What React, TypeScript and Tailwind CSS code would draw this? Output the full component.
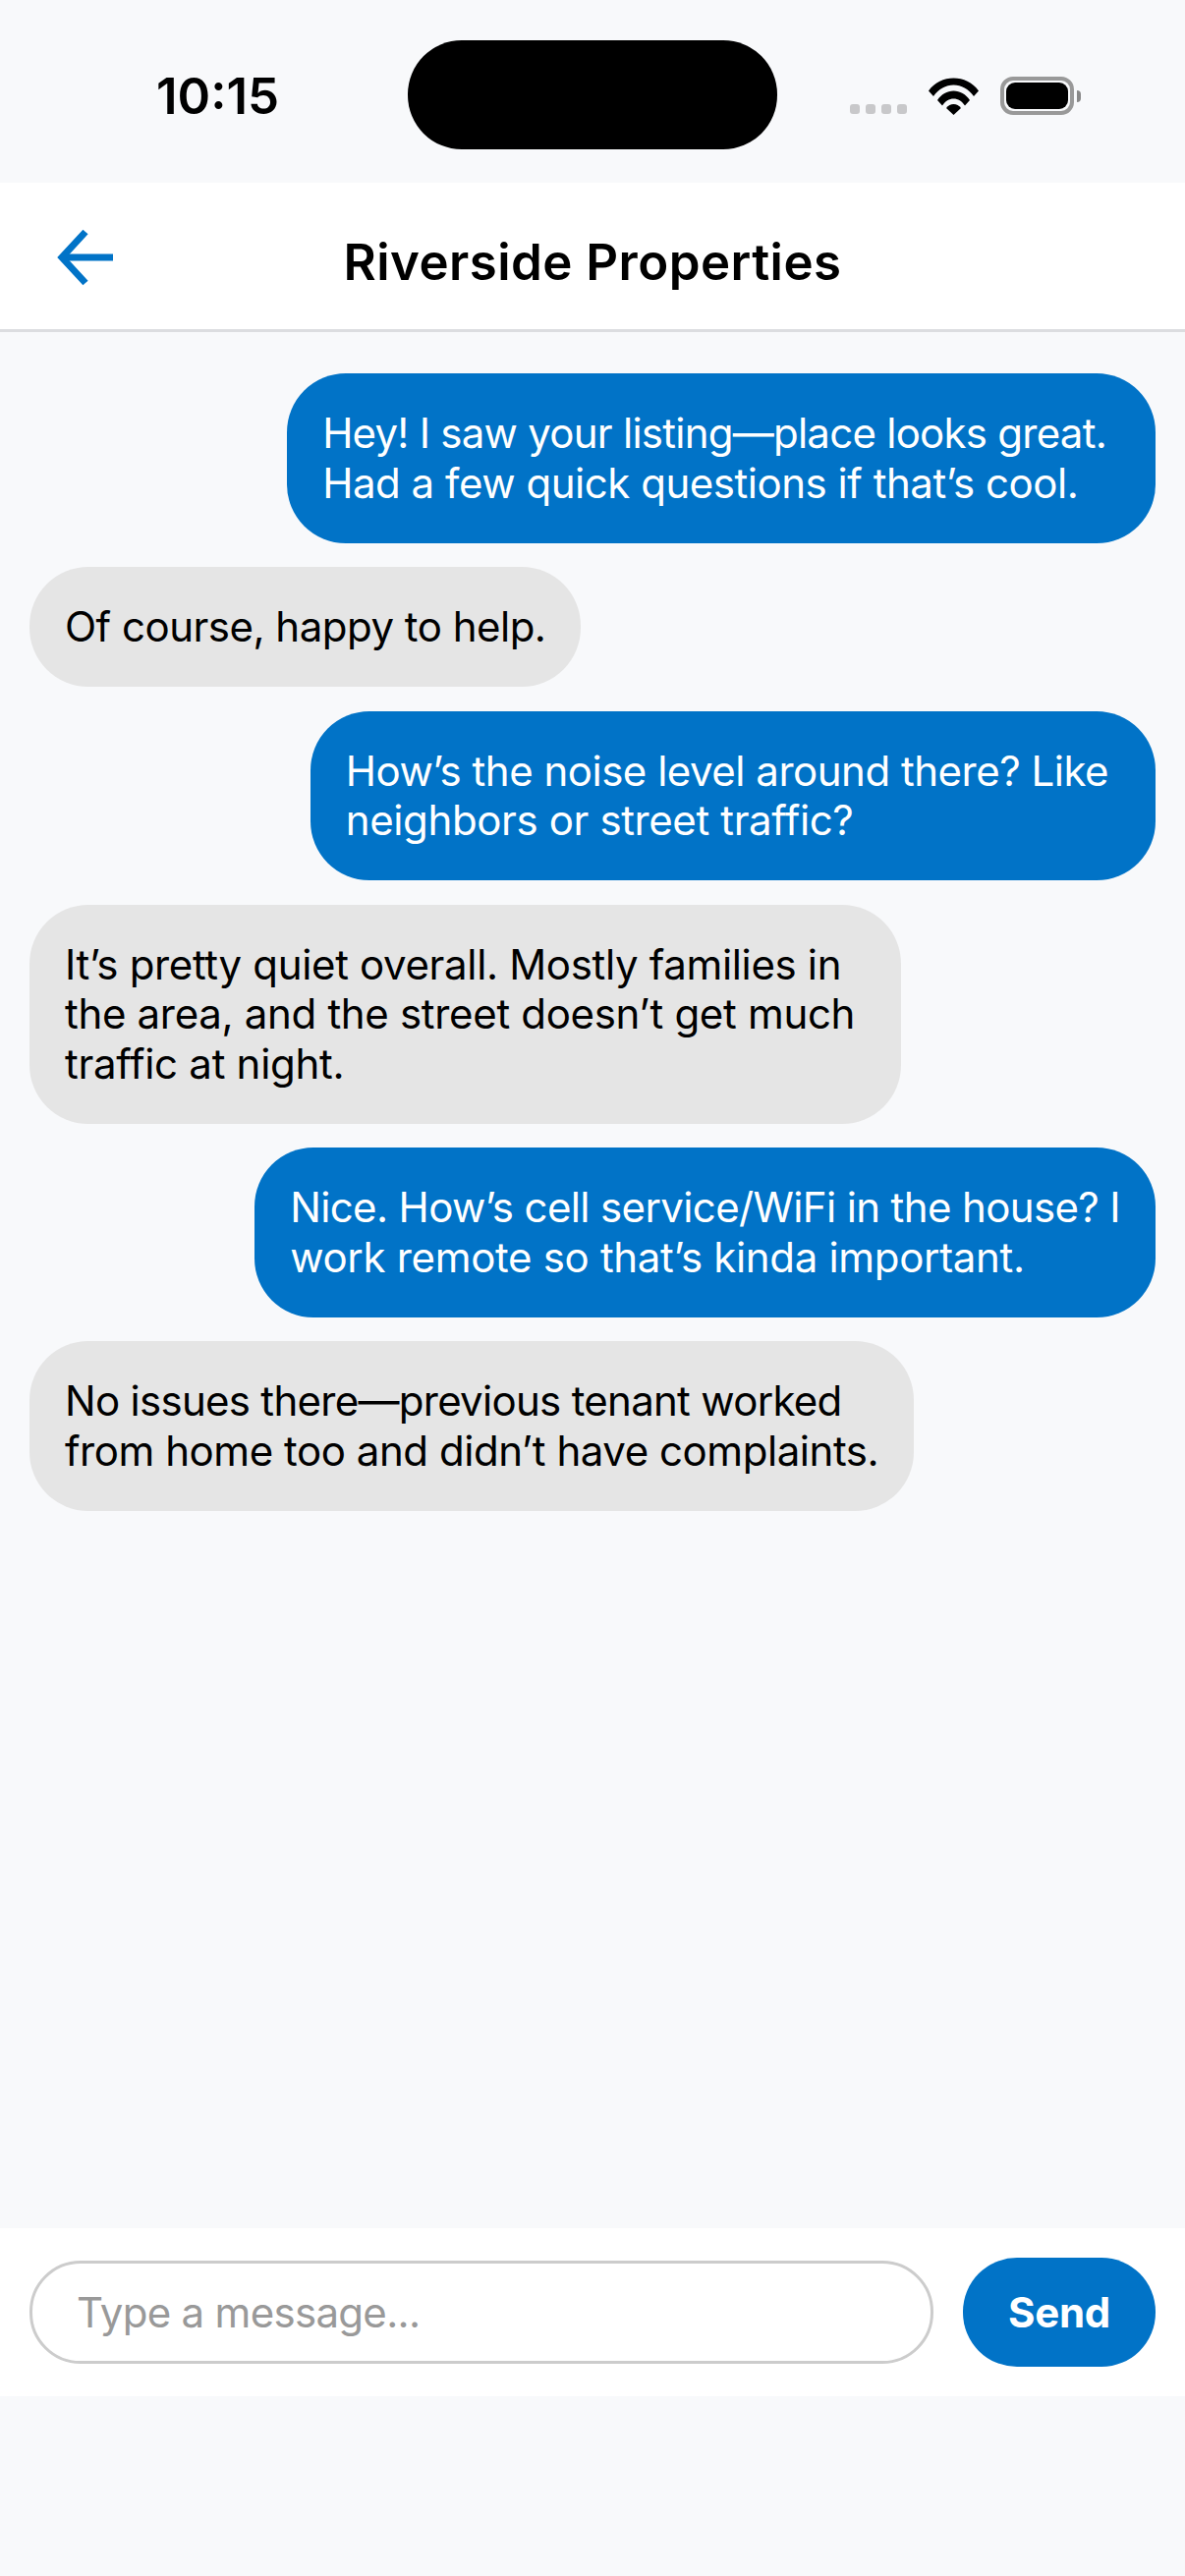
import React from "react";

const font = { fontFamily: "Inter, 'Liberation Sans', sans-serif" };

function Bubble({ mine, lines, right }: { mine?: boolean; lines: [string, string][]; right: string }) {
  return (
    <div
      className={
        (mine
          ? "self-end rounded-[60px] bg-[#0173c7] pl-[36px] pt-[36.4px] pb-[35.6px] text-[42px] leading-[50.4px] whitespace-nowrap text-white "
          : "self-start rounded-[60px] bg-[#e5e5e5] pl-[36px] pt-[36.4px] pb-[35.6px] text-[42px] leading-[50.4px] whitespace-nowrap text-black ") + right
      }
    >
      {lines.map(([l, t]) => (
        <div key={l} className={t}>
          {l}
        </div>
      ))}
    </div>
  );
}

export default function App() {
  return (
    <div style={font} className="flex h-[2622px] w-[1206px] flex-col bg-[#f8f9fb] text-black">
      {/* status bar */}
      <div className="flex h-[186px] items-start">
        <div className="mt-[67px] ml-[159px] w-[256px] text-[51px] leading-[62px] font-semibold">10:15</div>
        <div className="mt-[41px] h-[111px] w-[376px] rounded-[55px] bg-black" />
        <div className="mt-[78px] ml-[74px] flex items-end">
          <div className="mb-[1px] flex gap-[6px]">
            <span className="h-[10px] w-[10px] rounded-[3px] bg-[#c8c8ca]" />
            <span className="h-[10px] w-[10px] rounded-[3px] bg-[#c8c8ca]" />
            <span className="h-[10px] w-[10px] rounded-[3px] bg-[#c8c8ca]" />
            <span className="h-[10px] w-[10px] rounded-[3px] bg-[#c8c8ca]" />
          </div>
          <svg className="ml-[22px]" width="51" height="38" viewBox="0 0 51 38">
            <path d="M0 13.5C6.5 4.5 15.5 0.5 25.500 0.5S44.5 4.5 51 13.500L46 19C40.5 11.5 33.5 7.5 25.5 7.5S10.500 11.500 5 19Z" fill="#000" />
            <path d="M9 23C13 17 19 13.500 25.500 13.500S38 17 42 23L37 28.500C34 24 30 21.500 25.500 21.500S17 24 14 28.500Z" fill="#000" />
            <path d="M18 31C20 28.500 22.500 27 25.500 27S31 28.500 33 31L25.500 38Z" fill="#000" />
          </svg>
          <div className="ml-[22px] flex items-center">
            <div className="h-[39px] w-[75px] rounded-[13px] border-[4px] border-[#999] p-[2px]">
              <div className="h-full w-full rounded-[9px] bg-black" />
            </div>
            <div className="ml-[3px] h-[12px] w-[4px] rounded-r-[4px] bg-[#888]" />
          </div>
        </div>
      </div>

      {/* header */}
      <div className="relative flex h-[152px] items-center justify-center border-b-[3px] border-[#dcdde0] bg-white">
        <svg className="absolute top-[46px] left-[57px]" width="60" height="60" viewBox="0 0 60 60" fill="none" stroke="#0173c7" strokeWidth="7">
          <path d="M58 30H6" />
          <path d="M30 4L6 30L30 56" />
        </svg>
        <div className="mt-[12px] text-[51px] leading-[62px] font-semibold tracking-[0.45px]">Riverside Properties</div>
      </div>

      {/* messages */}
      <div className="flex flex-1 flex-col gap-[24.2px] px-[30px] pt-[42px]">
        <Bubble
          mine
          right="pr-[50px]"
          lines={[
            ["Hey! I saw your listing—place looks great.", "tracking-[-0.75px]"],
            ["Had a few quick questions if that’s cool.", "tracking-[-0.47px]"],
          ]}
        />
        <Bubble right="pr-[36px]" lines={[["Of course, happy to help.", "tracking-[-0.5px]"]]} />
        <Bubble
          mine
          right="pr-[48px]"
          lines={[
            ["How’s the noise level around there? Like", "tracking-[-0.49px]"],
            ["neighbors or street traffic?", "tracking-[-0.38px]"],
          ]}
        />
        <Bubble
          right="pr-[47px]"
          lines={[
            ["It’s pretty quiet overall. Mostly families in", "tracking-[-0.34px]"],
            ["the area, and the street doesn’t get much", "tracking-[-0.32px]"],
            ["traffic at night.", "tracking-[-0.28px]"],
          ]}
        />
        <Bubble
          mine
          right="pr-[36px]"
          lines={[
            ["Nice. How’s cell service/WiFi in the house? I", "tracking-[-0.63px]"],
            ["work remote so that’s kinda important.", "tracking-[-0.32px]"],
          ]}
        />
        <Bubble
          right="pr-[36px]"
          lines={[
            ["No issues there—previous tenant worked", "tracking-[-0.71px]"],
            ["from home too and didn’t have complaints.", "tracking-[-0.45px]"],
          ]}
        />
      </div>

      {/* input bar */}
      <div className="flex h-[171px] items-center gap-[30px] bg-white px-[30px]">
        <input
          placeholder="Type a message..."
          className="h-[105px] w-[920px] rounded-[52px] border-[3px] border-[#ccc] bg-white px-[45px] text-[42px] tracking-[-0.7px] outline-none placeholder:text-[#999]"
          style={font}
        />
        <div className="flex h-[111px] w-[196px] items-center justify-center rounded-[55px] bg-[#0173c7] text-[42px] font-bold tracking-[-0.3px] text-white">
          Send
        </div>
      </div>
      <div className="h-[183px]" />
    </div>
  );
}
